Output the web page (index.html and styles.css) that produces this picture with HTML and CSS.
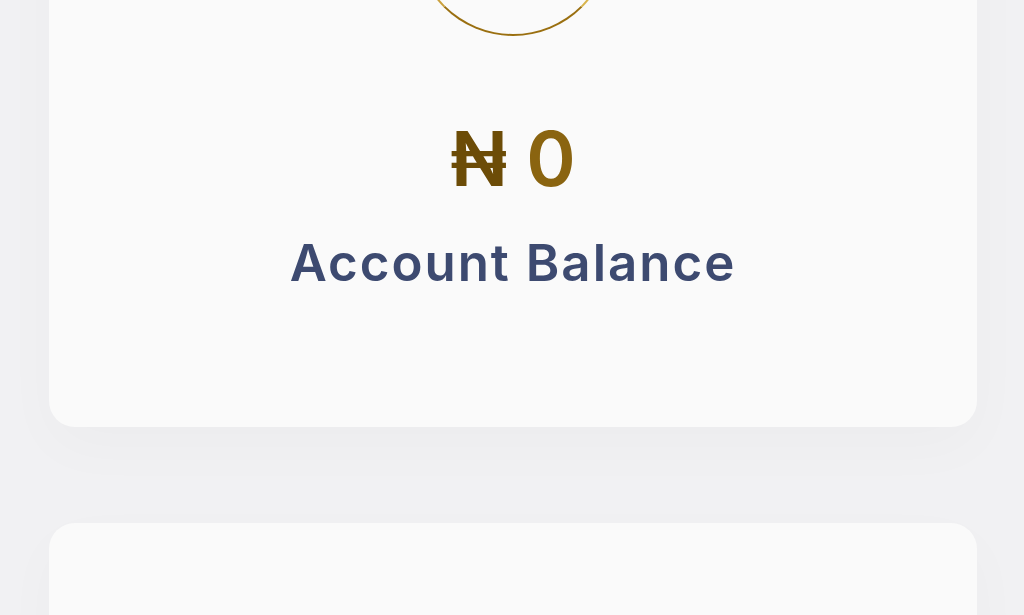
FILE: index.html
```html
<!DOCTYPE html>
<html>
<head>
<meta charset="utf-8">
<link rel="stylesheet" href="styles.css">
</head>
<body>
<main class="page">
  <section class="card balance-card">
    <div class="avatar"></div>
    <div class="amount"><span class="naira">₦</span> <span class="zero">0</span></div>
    <div class="label">Account Balance</div>
  </section>
  <section class="card next-card"></section>
</main>
</body>
</html>
```

FILE: styles.css
```css
html, body {
  margin: 0;
  padding: 0;
  background: #f1f1f3;
  overflow: hidden;
  height: 615px;
}
.page {
  display: flex;
  flex-direction: column;
  gap: 96px;
  padding: 0 47px 0 49px;
  margin-top: -260px;
  font-family: "Inter", "Noto Sans", sans-serif;
}
.card {
  background: #fafafa;
  border-radius: 26px;
  box-shadow: 0 20px 60px rgba(0, 0, 0, 0.025);
}
.balance-card {
  height: 687px;
  display: flex;
  flex-direction: column;
  align-items: center;
  box-sizing: border-box;
  padding-top: 100px;
}
.avatar {
  width: 196px;
  height: 196px;
  border-radius: 50%;
  box-sizing: border-box;
  border: 2px solid #c9a23a;
  border-color: #b88a1e #d8b44c #9a6f10 #caa03c;
}
.amount {
  margin-top: 85px;
  font-size: 75px;
  font-weight: 600;
  line-height: 1;
  letter-spacing: 0;
}
.naira {
  color: #6c4c07;
}
.zero {
  color: #8a6410;
}
.label {
  margin-top: 36px;
  font-size: 51px;
  font-weight: 600;
  color: #3d4a70;
  letter-spacing: 2px;
}
.next-card {
  height: 300px;
}
```
